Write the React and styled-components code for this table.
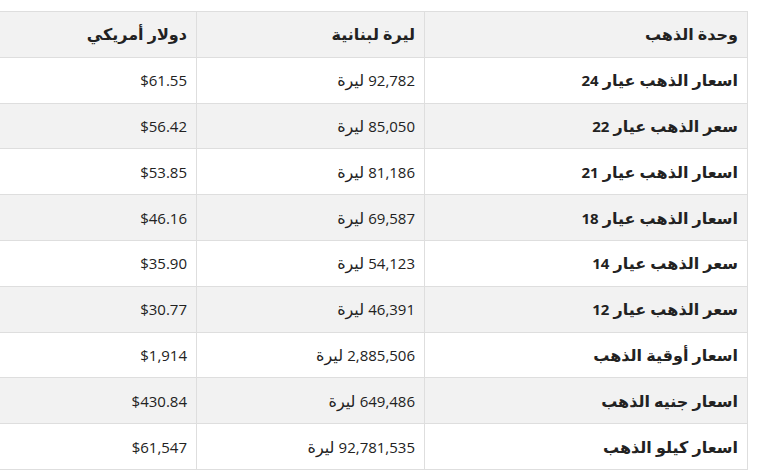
import React from 'react'
import styled, { createGlobalStyle } from 'styled-components'

const GlobalStyle = createGlobalStyle`
    body {
        margin: 0;
        background: #fff;
        font-family: "Open Sans", "DejaVu Sans", sans-serif;
        color: #222;
    }
`

const Page = styled.div`
    padding-top: 11px;
    width: 748px;
`

const Table = styled.table`
    direction: rtl;
    width: 100%;
    border-collapse: collapse;
    table-layout: fixed;
    font-size: 16px;
    border-top: 1px solid #dedede;
    border-right: 1px solid #dedede;
`

const Row = styled.tr`
    background: ${p => (p.$shade ? '#f2f2f2' : '#fff')};
    height: 45.8px;
`

const Cell = styled.td`
    text-align: right;
    padding: 0 9px;
    border-bottom: 1px solid #dedede;
    border-left: ${p => (p.$last ? 'none' : '1px solid #dedede')};
    font-weight: ${p => (p.$bold ? 700 : 400)};
    white-space: nowrap;
    color: #222;
`

const HeadCell = styled(Cell).attrs({ as: 'th' })`
    font-weight: 700;
`

// digits sit a touch smaller than the arabic text
const Num = styled.span`
    font-size: 15px;
`

const rows = [
    ['اسعار الذهب عيار ', '24', '92,782', '$61.55'],
    ['سعر الذهب عيار ', '22', '85,050', '$56.42'],
    ['اسعار الذهب عيار ', '21', '81,186', '$53.85'],
    ['اسعار الذهب عيار ', '18', '69,587', '$46.16'],
    ['سعر الذهب عيار ', '14', '54,123', '$35.90'],
    ['سعر الذهب عيار ', '12', '46,391', '$30.77'],
    ['اسعار أوقية الذهب', '', '2,885,506', '$1,914'],
    ['اسعار جنيه الذهب', '', '649,486', '$430.84'],
    ['اسعار كيلو الذهب', '', '92,781,535', '$61,547'],
]

export default function App() {
    return (
        <Page>
            <GlobalStyle />
            <Table>
                <colgroup>
                    <col style={{ width: 323 }} />
                    <col style={{ width: 228 }} />
                    <col />
                </colgroup>
                <thead>
                    <Row $shade>
                        <HeadCell>وحدة الذهب</HeadCell>
                        <HeadCell>ليرة لبنانية</HeadCell>
                        <HeadCell $last>دولار أمريكي</HeadCell>
                    </Row>
                </thead>
                <tbody>
                    {rows.map((r, i) => (
                        <Row key={r[0] + r[1]} $shade={i % 2 === 1}>
                            <Cell $bold>{r[0]}{r[1] && <Num>{r[1]}</Num>}</Cell>
                            <Cell><Num>{r[2]}</Num> ليرة</Cell>
                            <Cell $last><Num dir="ltr">{r[3]}</Num></Cell>
                        </Row>
                    ))}
                </tbody>
            </Table>
        </Page>
    )
}
